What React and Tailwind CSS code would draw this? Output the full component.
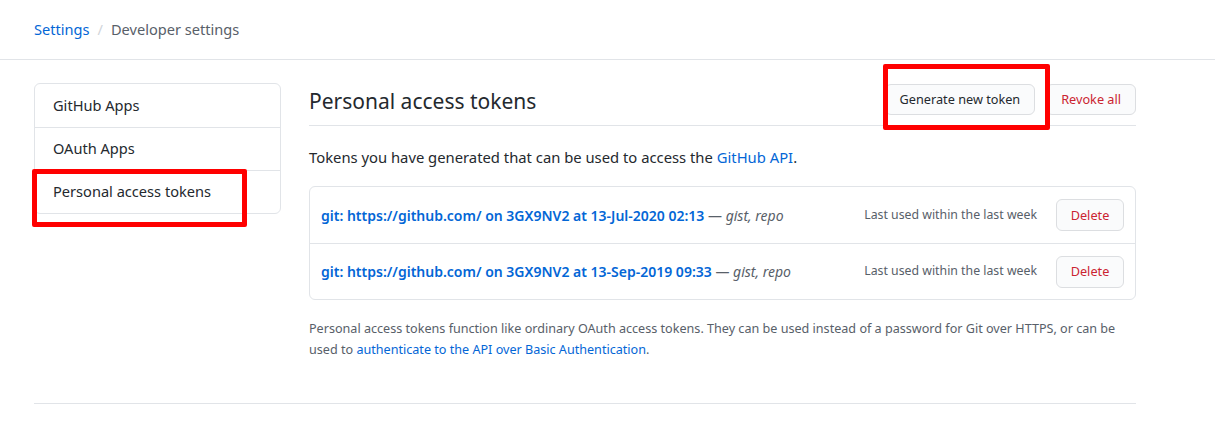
import React from 'react';

const tokens = [
  { name: 'git: https://github.com/ on 3GX9NV2 at 13-Jul-2020 02:13', scopes: 'gist, repo' },
  { name: 'git: https://github.com/ on 3GX9NV2 at 13-Sep-2019 09:33', scopes: 'gist, repo' },
];

const navItems = ['GitHub Apps', 'OAuth Apps', 'Personal access tokens'];

export default function App() {
  return (
    <div className="relative min-h-[436px] bg-white text-[#24292e]" style={{ fontFamily: '"Noto Sans", "Liberation Sans", sans-serif' }}>
      {/* Breadcrumb header */}
      <div className="border-b border-[#e1e4e8] h-[60px] flex items-center px-[34px] text-[14.6px]">
        <a className="text-[#0366d6]">Settings</a>
        <span className="mx-[8px] text-[#d1d5da]">/</span>
        <span className="text-[#586069]">Developer settings</span>
      </div>

      <div className="ml-[34px] w-[1102px] pt-[23px]">
        <div className="flex gap-[28px]">
          {/* Sidebar */}
          <nav className="w-[247px] shrink-0 self-start border border-[#e1e4e8] rounded-[6px]">
            {navItems.map((item, idx) => (
              <div
                key={item}
                className={`h-[43px] flex items-center px-[18px] text-[14.6px] ${idx > 0 ? 'border-t border-[#e1e4e8]' : ''}`}
              >
                {item}
              </div>
            ))}
          </nav>

          {/* Main */}
          <div className="flex-1">
            <div className="flex items-start justify-between border-b border-[#e1e4e8] h-[43px]">
              <h2 className="text-[21px] leading-[36px] font-normal">Personal access tokens</h2>
              <div className="flex gap-[11px] mt-[1px]">
                <button className="h-[31px] px-[14px] text-[12.7px] bg-[#fafbfc] border border-[#dcdee1] rounded-[6px]">
                  Generate new token
                </button>
                <button className="h-[31px] px-[14px] text-[12.7px] text-[#cb2431] bg-[#fafbfc] border border-[#dcdee1] rounded-[6px]">
                  Revoke all
                </button>
              </div>
            </div>

            <p className="mt-[20px] text-[14.8px]">
              Tokens you have generated that can be used to access the{' '}
              <a className="text-[#0366d6]">GitHub API</a>.
            </p>

            <div className="mt-[18px] border border-[#e1e4e8] rounded-[6px]">
              {tokens.map((t, idx) => (
                <div
                  key={t.name}
                  className={`h-[56px] flex items-center justify-between pl-[11px] pr-[11px] ${idx > 0 ? 'border-t border-[#e1e4e8]' : ''}`}
                >
                  <div className="text-[14px]">
                    <a className="text-[#0366d6] font-semibold">{t.name}</a>
                    <span className="text-[#586069]"> — <em>{t.scopes}</em></span>
                  </div>
                  <div className="flex items-center gap-[19px]">
                    <span className="text-[12.3px] text-[#586069]">Last used within the last week</span>
                    <button className="h-[32px] w-[68px] text-[12.7px] text-[#cb2431] bg-[#fafbfc] border border-[#dcdee1] rounded-[6px]">
                      Delete
                    </button>
                  </div>
                </div>
              ))}
            </div>

            <p className="mt-[18px] text-[12.6px] leading-[21px] text-[#586069]">
              Personal access tokens function like ordinary OAuth access tokens. They can be used instead of a password for Git over HTTPS, or can be used to{' '}
              <a className="text-[#0366d6]">authenticate to the API over Basic Authentication</a>.
            </p>
          </div>
        </div>

        <div className="mt-[43px] border-t border-[#e1e4e8]" />
      </div>

      {/* Annotation boxes */}
      <div className="absolute left-[32px] top-[169px] w-[215px] h-[58px] border-[5px] border-[#ff0000] rounded-[2px]" />
      <div className="absolute left-[883px] top-[64px] w-[167px] h-[66px] border-[5px] border-[#ff0000] rounded-[2px]" />
    </div>
  );
}
